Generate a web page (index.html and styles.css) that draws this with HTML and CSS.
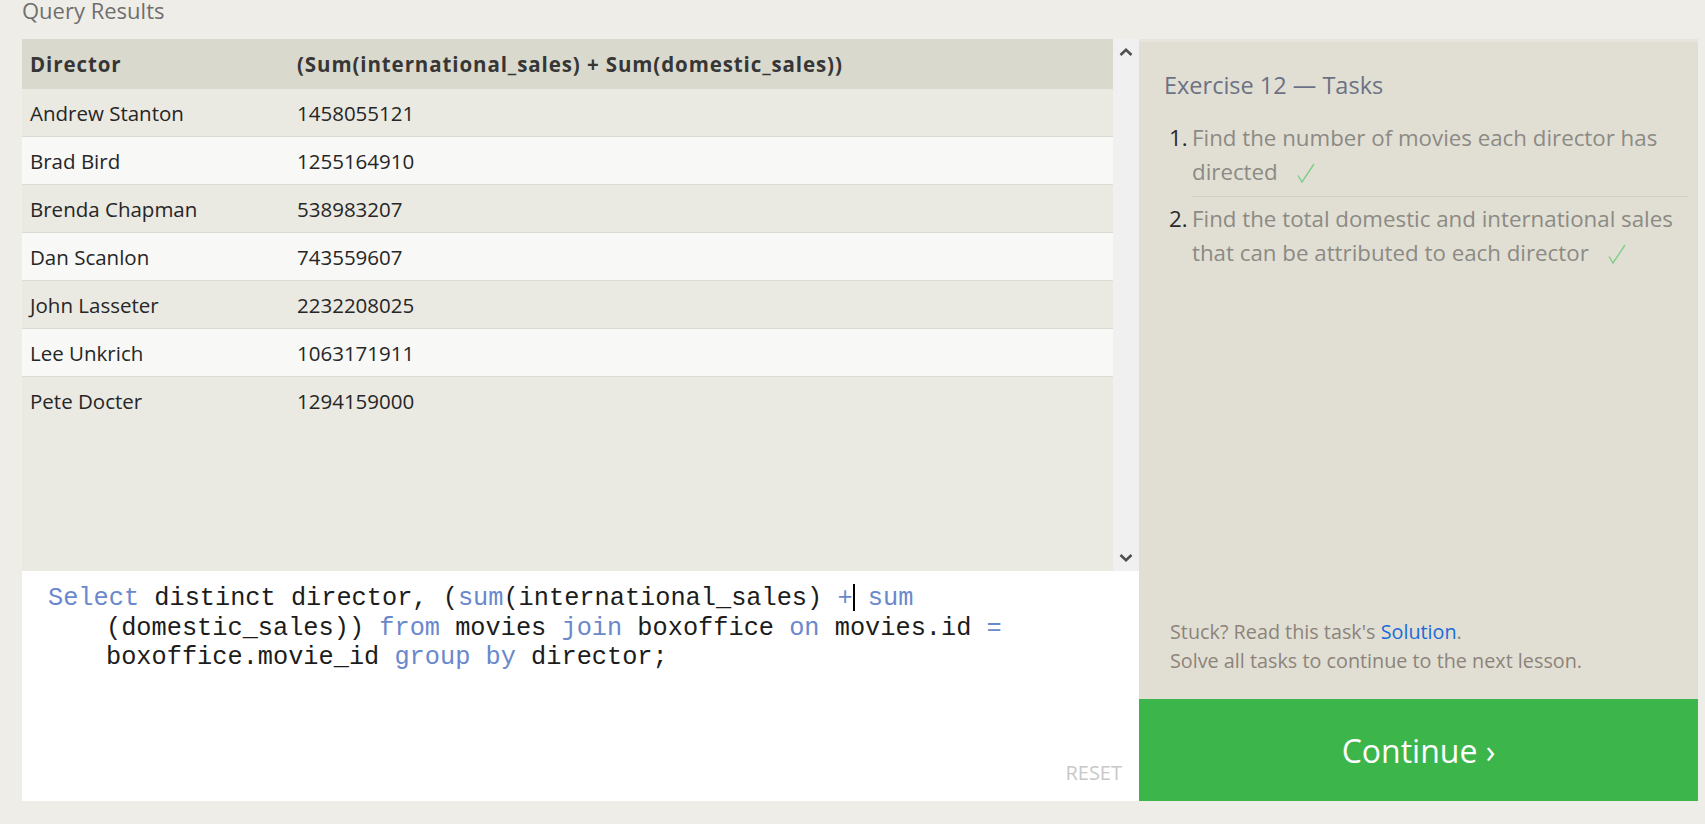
FILE: index.html
```html
<!DOCTYPE html>
<html lang="en">
<head>
<meta charset="utf-8">
<title>Query Results</title>
<link rel="stylesheet" href="styles.css">
</head>
<body>
<div class="page">
  <div class="title">Query Results</div>
  <div class="main">
    <div class="left">
      <div class="results">
        <div class="table">
          <div class="row head"><div class="cell">Director</div><div class="cell">(Sum(international_sales) + Sum(domestic_sales))</div></div>
          <div class="row odd"><div class="cell">Andrew Stanton</div><div class="cell">1458055121</div></div>
          <div class="row even"><div class="cell">Brad Bird</div><div class="cell">1255164910</div></div>
          <div class="row odd"><div class="cell">Brenda Chapman</div><div class="cell">538983207</div></div>
          <div class="row even"><div class="cell">Dan Scanlon</div><div class="cell">743559607</div></div>
          <div class="row odd"><div class="cell">John Lasseter</div><div class="cell">2232208025</div></div>
          <div class="row even"><div class="cell">Lee Unkrich</div><div class="cell">1063171911</div></div>
          <div class="row odd last"><div class="cell">Pete Docter</div><div class="cell">1294159000</div></div>
        </div>
        <div class="scrollbar">
          <svg class="arrow" width="14" height="8" viewBox="0 0 14 8"><path d="M1.5 7 L7 1.8 L12.5 7" fill="none" stroke="#505050" stroke-width="2.6"/></svg>
          <svg class="arrow" width="14" height="8" viewBox="0 0 14 8"><path d="M1.5 1 L7 6.2 L12.5 1" fill="none" stroke="#505050" stroke-width="2.6"/></svg>
        </div>
      </div>
      <div class="editor">
        <div class="code">
          <div class="line"><span class="kw">Select</span> distinct director, (<span class="kw">sum</span>(international_sales) <span class="kw">+</span><span class="cursor"></span> <span class="kw">sum</span></div>
          <div class="line indent">(domestic_sales)) <span class="kw">from</span> movies <span class="kw">join</span> boxoffice <span class="kw">on</span> movies.id <span class="kw">=</span></div>
          <div class="line indent">boxoffice.movie_id <span class="kw">group</span> <span class="kw">by</span> director;</div>
        </div>
        <div class="reset">RESET</div>
      </div>
    </div>
    <div class="right">
      <div class="tasks">
        <h2 class="heading">Exercise 12 — Tasks</h2>
        <ol class="list">
          <li class="item first"><span class="num">1.</span><span class="text">Find the number of movies each director has<br>directed<svg class="check" width="18" height="20" viewBox="0 0 18 20"><path d="M1 12.5 L5 19 L17 1" fill="none" stroke="#7fcd8c" stroke-width="1.4"/></svg></span></li>
          <li class="item second"><span class="num">2.</span><span class="text">Find the total domestic and international sales<br>that can be attributed to each director<svg class="check" width="18" height="20" viewBox="0 0 18 20"><path d="M1 12.5 L5 19 L17 1" fill="none" stroke="#7fcd8c" stroke-width="1.4"/></svg></span></li>
        </ol>
        <div class="stuck">Stuck? Read this task's <a class="link" href="#">Solution</a>.<br>Solve all tasks to continue to the next lesson.</div>
      </div>
      <div class="continue">Continue ›</div>
    </div>
  </div>
</div>
</body>
</html>
```

FILE: styles.css
```css
html, body {
  margin: 0;
  padding: 0;
}
body {
  background: #efede7;
  font-family: "Open Sans", "Noto Sans", sans-serif;
  color: #333;
  overflow: hidden;
}
.page {
  padding: 0 7px 0 22px;
}
.title {
  font-size: 22px;
  line-height: 20px;
  color: #6f6f6f;
  margin-bottom: 19px;
}
.main {
  display: flex;
  height: 762px;
}
.left {
  width: 1117px;
  display: flex;
  flex-direction: column;
}
.results {
  flex: none;
  height: 532px;
  display: flex;
  background: #eae9e2;
}
.table {
  flex: 1;
  display: flex;
  flex-direction: column;
}
.row {
  display: grid;
  grid-template-columns: 267px 1fr;
  height: 47px;
  flex: none;
  align-items: center;
  font-size: 20.5px;
  color: #262626;
  border-bottom: 1px solid #dcdbd3;
}
.row.head {
  height: 50px;
  border-bottom: 0;
  background: #dad9cd;
  font-weight: 700;
  color: #363636;
  letter-spacing: 0.9px;
}
.row.odd { background: #eae9e2; }
.row.even { background: #f8f8f6; }
.row.last { border-bottom: 0; }
.cell {
  padding-left: 8px;
  white-space: nowrap;
}
.scrollbar {
  width: 26px;
  background: #f0f0f0;
  display: flex;
  flex-direction: column;
  align-items: center;
  justify-content: space-between;
  padding: 9px 0 9px;
  box-sizing: border-box;
}
.arrow { display: block; }
.editor {
  flex: 1;
  min-height: 0;
  background: #fff;
  display: flex;
  flex-direction: column;
  box-shadow: 0 1px 0 #dddbd3;
}
.code {
  padding: 13px 0 0 26px;
  font-family: "Liberation Mono", "Courier New", monospace;
  font-size: 25.3px;
  line-height: 29.5px;
  color: #1c1c1c;
}
.line {
  white-space: pre;
}
.line.indent { padding-left: 58px; }
.kw { color: #6a88cc; }
.cursor {
  display: inline-block;
  width: 2px;
  height: 27px;
  margin-right: -2px;
  background: #000;
  vertical-align: -6px;
}
.reset {
  margin-top: auto;
  align-self: flex-end;
  font-size: 20px;
  line-height: 24px;
  color: #c8c8c8;
  padding: 0 17px 16px 0;
}
.right {
  flex: 1;
  display: flex;
  flex-direction: column;
}
.tasks {
  flex: 1;
  background: #e1dfd4;
  border-top: 3px solid #e6e4dc;
  display: flex;
  flex-direction: column;
  padding: 27px 10px 0 25px;
}
.heading {
  margin: 0;
  font-size: 23.5px;
  line-height: 32px;
  font-weight: 400;
  color: #6c7283;
}
.list {
  list-style: none;
  margin: 20px 0 0 5px;
  padding: 0;
}
.item {
  display: flex;
  font-size: 22.3px;
  line-height: 34px;
}
.num {
  width: 23px;
  flex: none;
  color: #2a2a2a;
}
.text {
  flex: 1;
  color: #8c8a84;
  white-space: nowrap;
}
.item.first .text {
  padding-bottom: 7px;
  border-bottom: 1px solid #d3d1c6;
}
.item.second .text { padding-top: 5px; }
.item.second .num { padding-top: 5px; }
.check {
  margin-left: 19px;
  vertical-align: -3px;
}
.stuck {
  margin-top: auto;
  margin-left: 6px;
  padding-bottom: 24px;
  font-size: 19.8px;
  line-height: 29px;
  color: #8d837a;
}
.link {
  color: #1b6ad6;
  text-decoration: none;
}
.continue {
  height: 102px;
  background: #3cb54a;
  color: #fff;
  font-size: 32px;
  display: flex;
  align-items: center;
  justify-content: center;
}
```
